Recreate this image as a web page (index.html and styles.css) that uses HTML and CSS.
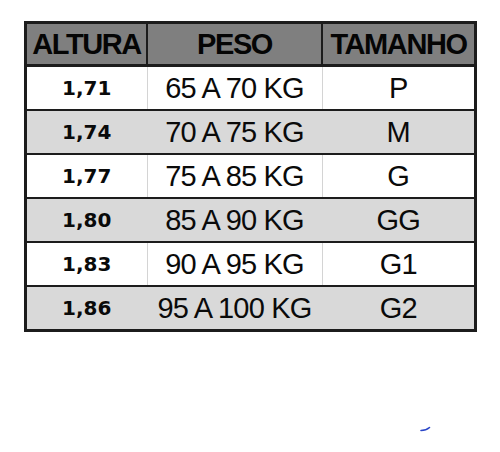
FILE: index.html
```html
<!DOCTYPE html>
<html lang="pt">
<head>
<meta charset="utf-8">
<link rel="stylesheet" href="styles.css">
</head>
<body>
<table class="sizes">
  <thead>
    <tr><th class="c1">ALTURA</th><th class="c2">PESO</th><th class="c3">TAMANHO</th></tr>
  </thead>
  <tbody>
    <tr class="w"><td class="h">1,71</td><td class="p">65 A 70 KG</td><td class="t">P</td></tr>
    <tr class="g"><td class="h">1,74</td><td class="p">70 A 75 KG</td><td class="t">M</td></tr>
    <tr class="w"><td class="h">1,77</td><td class="p">75 A 85 KG</td><td class="t">G</td></tr>
    <tr class="g"><td class="h">1,80</td><td class="p">85 A 90 KG</td><td class="t">GG</td></tr>
    <tr class="w"><td class="h">1,83</td><td class="p">90 A 95 KG</td><td class="t">G1</td></tr>
    <tr class="g"><td class="h">1,86</td><td class="p">95 A 100 KG</td><td class="t">G2</td></tr>
  </tbody>
</table>
<div class="mark"><svg width="12" height="6" viewBox="0 0 12 6"><path d="M1 4.5 Q6 4.5 9.5 1.5" stroke="#2a46c8" stroke-width="1.6" fill="none" stroke-linecap="round"/></svg></div>
</body>
</html>
```
FILE: styles.css
```css
html, body { margin: 0; padding: 0; background: #fff; }
body { width: 500px; height: 452px; overflow: hidden; }
.sizes {
  margin: 21px 0 0 24px;
  border-collapse: collapse;
  border: 3px solid #1c1c1c;
  width: 453px;
  table-layout: fixed;
}
.c1 { width: 119px; }
.c2 { width: 173px; }
.c3 { width: auto; }
th {
  background: #7f7f7f;
  color: #050505;
  font-family: "Liberation Sans", Arial, sans-serif;
  font-weight: bold;
  font-size: 29px;
  letter-spacing: -1.4px;
  height: 40px;
  padding: 0;
  border: 2px solid #1c1c1c;
  border-bottom-width: 3px;
  text-align: center;
  line-height: 40px;
}
td {
  padding: 0;
  height: 42px;
  text-align: center;
  color: #0a0a0a;
  border-top: 2px solid #1c1c1c;
  border-left: 1px solid #d4d4d4;
  border-right: 1px solid #d4d4d4;
}
tr.g td { background: #d9d9d9; border-left-color: #d9d9d9; border-right-color: #d9d9d9; }
tr.w td { background: #fff; }
td.h {
  font-family: "DejaVu Sans", Verdana, sans-serif;
  font-weight: bold;
  font-size: 20px;
  border-left: none;
}
td.p, td.t {
  font-family: "Liberation Sans", Arial, sans-serif;
  font-size: 29px;
  letter-spacing: -0.8px;
}
td.t { border-right: none; }
.mark { margin: 94px 0 0 420px; height: 6px; line-height: 0; }
```
